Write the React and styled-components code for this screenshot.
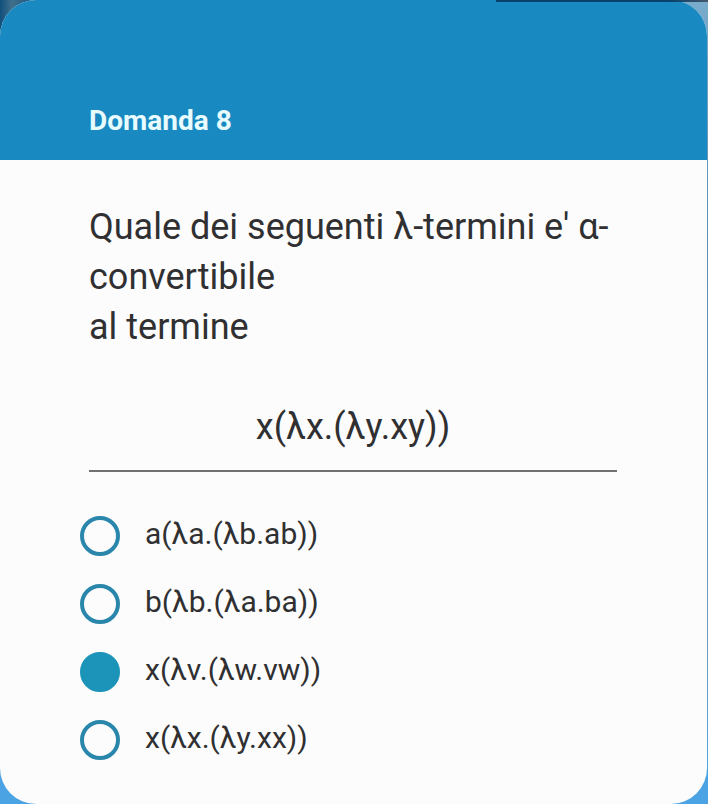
import React, { useState } from 'react';
import styled, { createGlobalStyle } from 'styled-components';

const GlobalStyle = createGlobalStyle`
  * { box-sizing: border-box; }
  body { margin: 0; font-family: Roboto, sans-serif; color: #303032; }
`;

const Page = styled.div`
  position: relative;
  min-height: 100vh;
  padding-right: 1px;
  display: flex;
  background:
    linear-gradient(to right, #104f7c, #42708c 12px, #104f7c 36px, transparent 36px) top / 100% 40px no-repeat,
    linear-gradient(#79abcc, #5d8fae 30%, #6d9cba 80%, #4ba3e3 96%);
`;

const TopStrip = styled.div`
  position: absolute;
  top: 0;
  right: 0;
  width: 30%;
  height: 2px;
  background: linear-gradient(to right, #07426e 82%, #46586a);
`;

const Card = styled.main`
  flex: 1;
  border-radius: 36px;
  overflow: hidden;
  background: #fcfcfc;
`;

const Header = styled.header`
  height: 160px;
  padding: 105px 90px 0 89px;
  background: #188ac1;
`;

const Title = styled.h1`
  margin: 0;
  color: #e8fbff;
  font-size: 28px;
  line-height: 32px;
  font-weight: 700;
`;

const Form = styled.form`
  padding: 42px 90px 40px 89px;
`;

const Question = styled.p`
  margin: 0;
  font-size: 36px;
  line-height: 50px;
`;

const Formula = styled.p`
  margin: 50px 0 0;
  padding: 0 0 18px;
  border-bottom: 2px solid #707072;
  font-size: 36px;
  line-height: 50px;
  text-align: center;
`;

const Options = styled.fieldset`
  margin: 44px 0 0 -9px;
  padding: 0;
  border: 0;
  display: grid;
  gap: 28px;
`;

const Option = styled.label`
  display: flex;
  align-items: center;
  gap: 25px;
  font-size: 30px;
  line-height: 36px;
`;

const OptionText = styled.span`
  padding-bottom: 4px;
`;

const Radio = styled.input`
  appearance: none;
  flex: none;
  width: 40px;
  height: 40px;
  margin: 0;
  border: 4px solid #2a87ab;
  border-radius: 50%;
  &:checked { background: #1c93b9; border-color: #1c93b9; }
`;

const choices = ['a(λa.(λb.ab))', 'b(λb.(λa.ba))', 'x(λv.(λw.vw))', 'x(λx.(λy.xx))'];

export default function App() {
  const [selected, setSelected] = useState(2);
  return (
    <Page>
      <GlobalStyle />
      <Card>
        <Header><Title>Domanda 8</Title></Header>
        <Form>
          <Question id="question">Quale dei seguenti λ-termini e' α-<wbr />convertibile<br />al termine</Question>
          <Formula>x(λx.(λy.xy))</Formula>
          <Options aria-labelledby="question">
            {choices.map((choice, i) => (
              <Option key={choice}>
                <Radio type="radio" name="answer" checked={selected === i} onChange={() => setSelected(i)} />
                <OptionText>{choice}</OptionText>
              </Option>
            ))}
          </Options>
        </Form>
      </Card>
      <TopStrip />
    </Page>
  );
}
